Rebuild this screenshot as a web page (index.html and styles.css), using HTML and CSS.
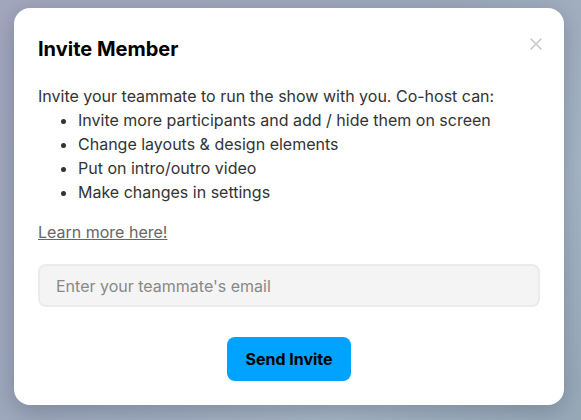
FILE: index.html
```html
<!DOCTYPE html>
<html>
<head lang="en">
    <meta charset="UTF-8">
    <title>Invite Member</title>
    <link rel="stylesheet" href="styles.css">
</head>
<body>
    <div class="backdrop">
        <div class="modal">
            <span class="close">
                <svg width="12" height="12" viewBox="0 0 12 12"><path d="M1 1L11 11M11 1L1 11" stroke="#c8c8c8" stroke-width="1.6" stroke-linecap="round"/></svg>
            </span>
            <h2 class="title">Invite Member</h2>
            <p class="intro">Invite your teammate to run the show with you. Co-host can:</p>
            <ul class="perks">
                <li>Invite more participants and add / hide them on screen</li>
                <li>Change layouts &amp; design elements</li>
                <li>Put on intro/outro video</li>
                <li>Make changes in settings</li>
            </ul>
            <a class="learn" href="#">Learn more here!</a>
            <input class="email" type="text" placeholder="Enter your teammate's email">
            <div class="actions">
                <button class="send">Send Invite</button>
            </div>
        </div>
    </div>
</body>
</html>
```

FILE: styles.css
```css
* {
    margin: 0;
    padding: 0;
    box-sizing: border-box;
}
body {
    width: 581px;
    height: 420px;
    overflow: hidden;
    font-family: Inter, "Noto Sans", sans-serif;
}
.backdrop {
    height: 420px;
    padding: 8px 17px 0 14px;
    background: linear-gradient(135deg, #a2a7bd 0%, #9ea9bd 45%, #a6b6c7 75%, #97a9b7 100%);
}
.modal {
    position: relative;
    width: 550px;
    height: 397px;
    background: #fff;
    border-radius: 16px;
    padding: 28px 24px 24px;
    box-shadow: 0 6px 24px rgba(60, 70, 90, 0.35);
    display: flex;
    flex-direction: column;
}
.close {
    position: absolute;
    top: 30px;
    right: 22px;
    width: 12px;
    height: 12px;
    display: flex;
}
.title {
    font-size: 20px;
    line-height: 26px;
    font-weight: 700;
    color: #000;
    margin-bottom: 22px;
}
.intro,
.perks {
    font-size: 16px;
    line-height: 24px;
    color: #333;
}
.perks {
    padding-left: 40px;
    margin-bottom: 16px;
}
.learn {
    align-self: flex-start;
    font-size: 16px;
    line-height: 24px;
    color: #666;
    text-decoration: underline;
    margin-bottom: 20px;
}
.email {
    width: 100%;
    height: 44px;
    background: #f4f4f4;
    border: 2px solid #ebebeb;
    border-radius: 8px;
    padding: 0 16px;
    font-family: inherit;
    font-size: 16px;
    color: #333;
    outline: none;
}
.email::placeholder {
    color: #888;
}
.actions {
    display: flex;
    justify-content: center;
    margin-top: 30px;
}
.send {
    width: 124px;
    height: 44px;
    background: #00a3ff;
    border: none;
    border-radius: 8px;
    font-family: inherit;
    font-size: 16px;
    font-weight: 700;
    color: #000;
}
```
